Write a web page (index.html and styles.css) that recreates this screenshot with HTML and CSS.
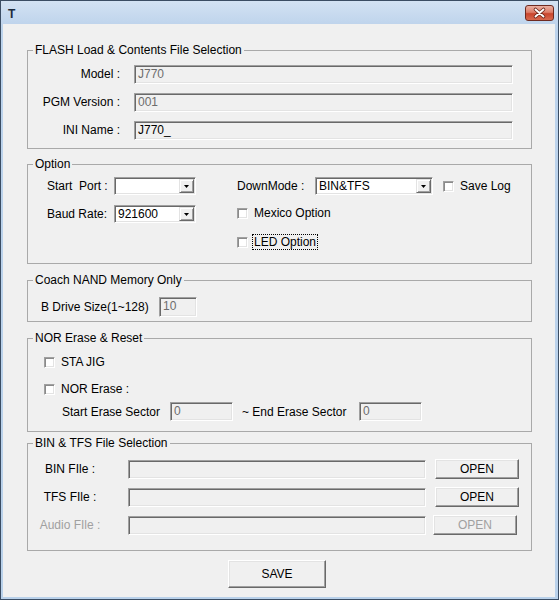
FILE: index.html
```html
<!DOCTYPE html>
<html>
<head>
<meta charset="utf-8">
<title>T</title>
<link rel="stylesheet" href="styles.css">
</head>
<body>
<div class="window">
  <div class="titlebar">
    <span class="title">T</span>
    <span class="close">
      <svg width="27" height="14" viewBox="0 0 27 14">
        <path d="M9.5 3.5 L17.5 10.5 M17.5 3.5 L9.5 10.5" stroke="#6b2418" stroke-width="3.6" stroke-linecap="round"/>
        <path d="M9.5 3.5 L17.5 10.5 M17.5 3.5 L9.5 10.5" stroke="#ffffff" stroke-width="1.9" stroke-linecap="round"/>
      </svg>
    </span>
  </div>
  <div class="client">
    <fieldset class="group g-flash">
      <legend>FLASH Load &amp; Contents File Selection</legend>
      <div class="rows">
        <div class="frow"><span class="lbl-r">Model :</span><span class="edit dis w-long">J770</span></div>
        <div class="frow"><span class="lbl-r">PGM Version :</span><span class="edit dis w-long">001</span></div>
        <div class="frow"><span class="lbl-r">INI Name :</span><span class="edit w-long">J770_</span></div>
      </div>
    </fieldset>

    <fieldset class="group g-option">
      <legend>Option</legend>
      <div class="opt">
        <div class="col-left">
          <div class="orow">
            <span class="lbl-port">Start&nbsp; Port :</span>
            <span class="combo w-small"><span class="ctext"></span><span class="dd"><svg width="5" height="3" viewBox="0 0 5 3"><polygon points="0,0 5,0 2.5,3" fill="#000"/></svg></span></span>
          </div>
          <div class="orow r2">
            <span class="lbl-port">Baud Rate:</span>
            <span class="combo w-small"><span class="ctext">921600</span><span class="dd"><svg width="5" height="3" viewBox="0 0 5 3"><polygon points="0,0 5,0 2.5,3" fill="#000"/></svg></span></span>
          </div>
        </div>
        <div class="col-right">
          <div class="orow">
            <span class="lbl-mode">DownMode :</span>
            <span class="combo w-mode"><span class="ctext">BIN&amp;TFS</span><span class="dd"><svg width="5" height="3" viewBox="0 0 5 3"><polygon points="0,0 5,0 2.5,3" fill="#000"/></svg></span></span>
            <span class="check ml"><span class="box"></span><span class="ctl">Save Log</span></span>
          </div>
          <div class="orow r-mex">
            <span class="check"><span class="box"></span><span class="ctl">Mexico Option</span></span>
          </div>
          <div class="orow r-led">
            <span class="check"><span class="box"></span><span class="ctl focus">LED Option</span></span>
          </div>
        </div>
      </div>
    </fieldset>

    <fieldset class="group g-nand">
      <legend>Coach NAND Memory Only</legend>
      <div class="nrow">
        <span class="lbl-drive">B Drive Size(1~128)</span>
        <span class="edit dis w-drive">10</span>
      </div>
    </fieldset>

    <fieldset class="group g-nor">
      <legend>NOR Erase &amp; Reset</legend>
      <div class="nor">
        <div class="crow"><span class="check"><span class="box"></span><span class="ctl">STA JIG</span></span></div>
        <div class="crow r-nor"><span class="check"><span class="box"></span><span class="ctl">NOR Erase :</span></span></div>
        <div class="srow">
          <span class="lbl-start">Start Erase Sector</span>
          <span class="edit dis w-sector">0</span>
          <span class="lbl-end">~ End Erase Sector</span>
          <span class="edit dis w-sector">0</span>
        </div>
      </div>
    </fieldset>

    <fieldset class="group g-bin">
      <legend>BIN &amp; TFS File Selection</legend>
      <div class="files">
        <div class="brow">
          <span class="lbl-file">BIN FIle :</span>
          <span class="edit w-file"></span>
          <span class="btn btn-open">OPEN</span>
        </div>
        <div class="brow">
          <span class="lbl-file">TFS FIle :</span>
          <span class="edit w-file"></span>
          <span class="btn btn-open">OPEN</span>
        </div>
        <div class="brow">
          <span class="lbl-file gray">Audio FIle :</span>
          <span class="edit w-file"></span>
          <span class="btn btn-open btn-audio gray">OPEN</span>
        </div>
      </div>
    </fieldset>

    <div class="save-row"><span class="btn btn-save">SAVE</span></div>
  </div>
</div>
</body>
</html>
```

FILE: styles.css
```css
html, body {
  margin: 0;
  padding: 0;
}
body {
  font-family: "Liberation Sans", Arial, sans-serif;
  font-size: 12px;
  color: #000;
  background: #f0f0f0;
}
.window {
  width: 559px;
  height: 600px;
  box-sizing: border-box;
  border: 1px solid #3b4d63;
  padding: 0 3px 2px 2px;
  background: linear-gradient(#c9dbef, #bcd3ec 30px, #b9d1ea);
  display: flex;
  flex-direction: column;
}
.titlebar {
  height: 23px;
  flex: none;
  display: flex;
  justify-content: space-between;
  align-items: flex-start;
  background: linear-gradient(#d3e2f3, #bfd4ec);
  margin: 0 -3px 0 -2px;
  padding: 0 4px 0 7px;
}
.title {
  font-weight: bold;
  font-size: 12px;
  line-height: 14px;
  margin-top: 6px;
  color: #1b2a3d;
}
.close {
  margin-top: 4px;
  width: 29px;
  height: 16px;
  box-sizing: border-box;
  border: 1px solid #6e2a20;
  border-radius: 3px;
  background: linear-gradient(#eab0a2 0%, #dd7d69 45%, #c9452d 55%, #d8694f 100%);
  display: flex;
  align-items: center;
  justify-content: center;
}
.close svg {
  display: block;
}
.client {
  flex: 1;
  background: #f0f0f0;
  padding-left: 24px;
}

/* group boxes */
.group {
  margin: 0;
  padding: 0;
  width: 505px;
  box-sizing: border-box;
  border: 1px solid #a9a9a9;
  min-inline-size: 0;
}
.group legend {
  padding: 0 2px;
  margin-left: 5px;
  line-height: 14px;
  font-size: 12px;
}
.g-flash { margin-top: 19px; }
.g-option { margin-top: 8px; }
.g-nand { margin-top: 9px; }
.g-nor { margin-top: 9px; }
.g-bin { margin-top: 4px; }

/* edits */
.edit {
  display: block;
  height: 19px;
  box-sizing: border-box;
  background: #f0f0f0;
  border-top: 1px solid #a0a0a0;
  border-left: 1px solid #a0a0a0;
  border-right: 1px solid #ffffff;
  border-bottom: 1px solid #ffffff;
  box-shadow: inset 1px 1px 0 #696969, inset -1px -1px 0 #e3e3e3;
  padding: 1px 3px 0;
  line-height: 15px;
  white-space: nowrap;
  overflow: hidden;
}
.edit.dis { color: #6d6d6d; }

/* FLASH group */
.g-flash .rows {
  padding: 7px 0 8px;
  display: flex;
  flex-direction: column;
  gap: 8px;
}
.frow {
  display: flex;
  align-items: center;
  height: 20px;
}
.lbl-r {
  width: 92px;
  text-align: right;
  margin-right: 14px;
  white-space: nowrap;
}
.w-long { width: 379px; }

/* Option group */
.opt {
  display: flex;
  padding: 6px 0 12px;
}
.col-left {
  width: 209px;
  box-sizing: border-box;
  padding-left: 19px;
}
.orow {
  display: flex;
  align-items: center;
  height: 18px;
}
.col-left .r2 { margin-top: 10px; }
.col-right .r-mex { margin-top: 9px; }
.col-right .r-led { margin-top: 11px; }
.lbl-port {
  width: 67px;
  white-space: nowrap;
}
.lbl-mode {
  width: 78px;
  white-space: nowrap;
}
.combo {
  display: flex;
  align-items: stretch;
  height: 18px;
  box-sizing: border-box;
  background: #fff;
  border-top: 1px solid #a0a0a0;
  border-left: 1px solid #a0a0a0;
  border-right: 1px solid #fff;
  border-bottom: 1px solid #fff;
  box-shadow: inset 1px 1px 0 #696969, inset -1px -1px 0 #e3e3e3;
  padding: 1px 1px 1px 2px;
}
.w-small { width: 82px; }
.w-mode { width: 118px; }
.ctext {
  flex: 1;
  line-height: 14px;
  padding-left: 1px;
  white-space: nowrap;
}
.dd {
  width: 15px;
  box-sizing: border-box;
  background: #f0f0f0;
  border-top: 1px solid #e3e3e3;
  border-left: 1px solid #e3e3e3;
  border-right: 1px solid #696969;
  border-bottom: 1px solid #696969;
  box-shadow: inset 1px 1px 0 #fff, inset -1px -1px 0 #a0a0a0;
  display: flex;
  align-items: center;
  justify-content: center;
}
.dd svg { display: block; }

/* checkboxes */
.check {
  display: flex;
  align-items: center;
}
.check.ml { margin-left: 10px; }
.box {
  width: 11px;
  height: 11px;
  box-sizing: border-box;
  background: #fff;
  border-top: 1px solid #a0a0a0;
  border-left: 1px solid #a0a0a0;
  border-right: 1px solid #fff;
  border-bottom: 1px solid #fff;
  box-shadow: inset 1px 1px 0 #8a8a8a, inset -1px -1px 0 #e3e3e3;
  flex: none;
}
.ctl {
  margin-left: 6px;
  white-space: nowrap;
  line-height: 14px;
}
.ctl.focus {
  margin-left: 5px;
  outline: 1px dotted #000;
  padding: 0 1px;
}

/* NAND group */
.nrow {
  display: flex;
  align-items: center;
  height: 20px;
  padding: 10px 0 4px 13px;
}
.lbl-drive {
  width: 118px;
  white-space: nowrap;
}
.w-drive { width: 38px; height: 20px; }

/* NOR group */
.nor {
  padding: 8px 0 10px;
}
.crow {
  display: flex;
  align-items: center;
  height: 18px;
  padding-left: 16px;
}
.crow.r-nor { margin-top: 9px; }
.srow {
  display: flex;
  align-items: center;
  height: 19px;
  margin-top: 4px;
  padding-left: 34px;
}
.lbl-start {
  width: 108px;
  white-space: nowrap;
}
.lbl-end {
  width: 117px;
  margin-left: 9px;
  white-space: nowrap;
}
.w-sector { width: 63px; }

/* BIN group */
.files {
  padding: 9px 0 15px;
  display: flex;
  flex-direction: column;
  gap: 8px;
}
.brow {
  display: flex;
  align-items: center;
  height: 20px;
}
.lbl-file {
  width: 84px;
  text-align: center;
  margin-right: 16px;
  white-space: nowrap;
}
.gray { color: #a0a0a0; }
.w-file { width: 298px; }

/* buttons */
.btn {
  display: flex;
  align-items: center;
  justify-content: center;
  box-sizing: border-box;
  background: #f0f0f0;
  border-top: 1px solid #ffffff;
  border-left: 1px solid #ffffff;
  border-right: 1px solid #696969;
  border-bottom: 1px solid #696969;
  box-shadow: inset -1px -1px 0 #a0a0a0, inset 1px 1px 0 #e3e3e3;
}
.btn-open {
  width: 84px;
  height: 20px;
  margin-left: 9px;
}
.btn-audio { margin-left: 7px; }
.save-row {
  display: flex;
  margin-top: 9px;
  padding-left: 201px;
}
.btn-save {
  width: 98px;
  height: 28px;
}
```
